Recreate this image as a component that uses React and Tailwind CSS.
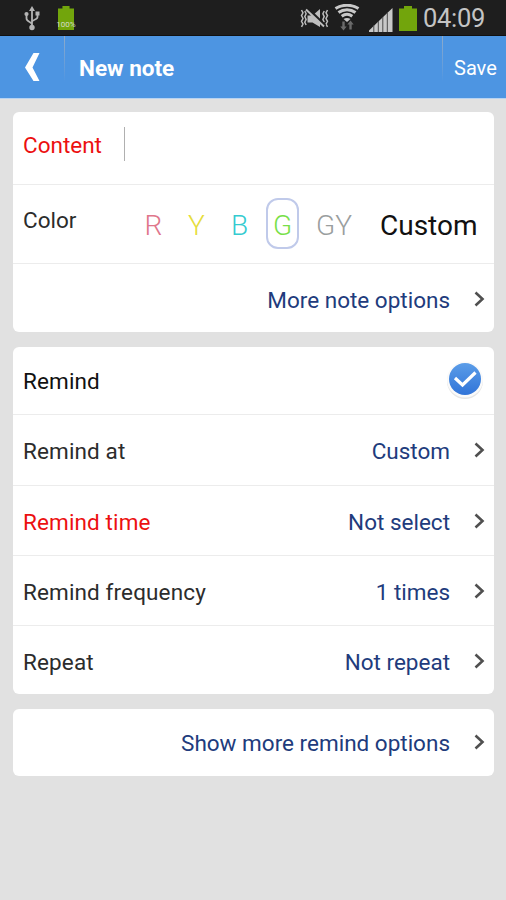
import { useState } from "react";

const COLORS = [
  { id: "R", className: "w-[33px] text-[#e0768b]" },
  { id: "Y", className: "w-[33px] text-[#e6dd3c]" },
  { id: "B", className: "w-[33px] text-[#35cbd0]" },
  { id: "G", className: "w-[33px] text-[#78e048]" },
  { id: "GY", className: "ml-[1px] w-12 text-[#9a9e9e]" },
];

function UsbIcon() {
  return (
    <svg width="16" height="25" viewBox="0 0 16 25" fill="none" stroke="#b4b4b4" strokeWidth="1.8">
      <path d="M8 4v17M8 18.500C8 16 2.500 16 2.500 12.500V8M8 16c0-2.500 5.500-2 5.500-5V7.500" />
      <path d="M8 0l3 5H5z" fill="#b4b4b4" stroke="none" />
      <circle cx="2.500" cy="8" r="2.100" fill="#b4b4b4" stroke="none" />
      <path d="M11.500 5.500h4v4h-4z" fill="#b4b4b4" stroke="none" />
      <circle cx="8" cy="21.500" r="2.700" fill="#b4b4b4" stroke="none" />
    </svg>
  );
}

function BatteryIcon({ className }) {
  return (
    <svg className={className} viewBox="0 0 18 25" preserveAspectRatio="none" fill="#72a50c">
      <path d="M5 0h8v2.500h5V25H0V2.500h5z" />
    </svg>
  );
}

function MuteIcon() {
  return (
    <svg width="29" height="21" viewBox="0 0 29 21" fill="none" stroke="#bdbdbd" strokeWidth="1.500">
      <path d="M1.500 2l1.500 2.800-1.500 2.800 1.500 2.900-1.500 2.800 1.500 2.800-1.500 2.800M4.800 3l1.300 2.800-1.300 2.800 1.300 2.800-1.300 2.800 1.300 2.800" />
      <path d="M27.500 2L26 4.800l1.500 2.800-1.500 2.900 1.500 2.800-1.500 2.800 1.500 2.800M24.200 3l-1.300 2.800 1.300 2.800-1.300 2.800 1.300 2.800" />
      <path d="M7.500 7.500h5L20 1v18l-7.500-4.500h-5z" fill="#bdbdbd" stroke="none" />
      <path d="M8 1L25 17.500" stroke="#1e1e1e" strokeWidth="3" />
      <path d="M6 1.500L24 18.500" strokeWidth="2" />
    </svg>
  );
}

function WifiIcon() {
  return (
    <svg width="26" height="27" viewBox="0 0 26 27" fill="none" stroke="#c9c9c9" strokeWidth="3">
      <path d="M1.500 4.500C8 .2 18 .2 24.500 4.500M4.500 8.500c5-3.800 12-3.800 17 0M7.700 12.300c3.200-2.400 7.400-2.400 10.600 0" />
      <path d="M9.500 15c2-1.500 5-1.500 7 0L13 18z" fill="#c9c9c9" stroke="none" />
      <path d="M8.300 17.500h2.400v5h2l-3.200 4-3.200-4h2zM15.300 25.500h2.400v-5h2l-3.200-4-3.200 4h2z" fill="#6a6a6a" stroke="none" />
    </svg>
  );
}

function SignalIcon() {
  return (
    <svg width="24" height="24" viewBox="0 0 24 24" fill="#c9c9c9">
      <path d="M0 24v-1.500L23.500 0v24z" />
      <path d="M4.800 17v7M9.300 13v11M13.800 9v15M18.300 5v19" stroke="#4a4a4a" strokeWidth="1" />
    </svg>
  );
}

function StatusBar() {
  return (
    <div className="flex h-[36px] items-start bg-[#1e1e1e] border-b border-[#111]">
      <div className="ml-[24px] mt-[6px]">
        <UsbIcon />
      </div>
      <div className="relative ml-[16px] mt-[6px] w-[20px]">
        <BatteryIcon className="mx-auto h-[24px] w-[16px]" />
        <span className="absolute inset-x-0 bottom-[1px] text-center text-[8px] leading-[8px] text-[#d5dcc8]">
          100%
        </span>
      </div>
      <div className="ml-auto mt-[8px]">
        <MuteIcon />
      </div>
      <div className="ml-[5px] mt-[4px]">
        <WifiIcon />
      </div>
      <div className="ml-[9px] mt-[8px]">
        <SignalIcon />
      </div>
      <BatteryIcon className="ml-[6px] mt-[6px] h-[25px] w-[18px]" />
      <span className="ml-[6px] mt-[3px] w-[83px] text-[25.5px] leading-[30px] tracking-[-0.3px] text-[#c4c4c4]">
        04:09
      </span>
    </div>
  );
}

function Header() {
  return (
    <header className="flex h-[63px] bg-[#4d95e2] text-white border-b border-[#b7d3f2]">
      <button type="button" className="flex w-[64px] pl-[25px] pt-[17px]">
        <svg width="15" height="29" viewBox="0 0 15 29" fill="#fff">
          <path d="M8.500 0H14.500L7.500 14.500 14.500 28H8.500L0 14.500z" />
        </svg>
      </button>
      <div className="h-[46px] w-px bg-linear-to-b from-[#8fabc9] to-[#4d95e2]" />
      <h1 className="ml-[14px] mt-[17px] text-[22.500px] leading-[30px] font-bold">New note</h1>
      <div className="ml-auto h-[46px] w-px bg-linear-to-b from-[#8fabc9] to-[#4d95e2]" />
      <button type="button" className="mt-[17px] flex w-[63px] pl-[11px] text-[20px] leading-[30px]">
        Save
      </button>
    </header>
  );
}

function Chevron() {
  return (
    <svg className="ml-[24px] mr-[9px]" width="11" height="16" viewBox="0 0 11 16" fill="none" stroke="#505050" strokeWidth="2.600">
      <path d="M1.500 1.500L8.500 8l-7 6.500" />
    </svg>
  );
}

function Card({ className, children }) {
  return (
    <section className={`ml-[13px] mr-[12px] divide-y divide-[#ececec] overflow-hidden rounded-[6px] bg-white ${className}`}>
      {children}
    </section>
  );
}

function Row({ label, value, required, className }) {
  return (
    <div className={`flex items-center pl-[10px] ${className}`}>
      {label && (
        <span className={`pt-[2px] tracking-[0.13px] ${required ? "text-[#ec1010]" : "text-[#2c2c2c]"}`}>
          {label}
        </span>
      )}
      <span className="ml-auto pt-[2px] text-[#213b7c]">{value}</span>
      <Chevron />
    </div>
  );
}

function CheckIcon() {
  return (
    <svg width="38" height="38" viewBox="0 0 38 38" fill="none">
      <defs>
        <linearGradient id="check" x1="0" y1="0" x2="0" y2="1">
          <stop offset="0" stopColor="#5b9de8" />
          <stop offset="1" stopColor="#3174d8" />
        </linearGradient>
      </defs>
      <circle cx="19" cy="20" r="18" fill="#e6e6e6" />
      <circle cx="19" cy="18.500" r="18" fill="#fafafa" />
      <circle cx="19" cy="18" r="16" fill="url(#check)" />
      <path d="M9 17l7.500 7L29.500 11.500" stroke="#fff" strokeWidth="3.200" />
    </svg>
  );
}

export default function App() {
  const [color, setColor] = useState("G");
  const [remind, setRemind] = useState(true);

  return (
    <div className="h-[900px] w-[506px] overflow-hidden bg-[#e1e1e1] font-['Roboto',sans-serif] text-[22.500px] leading-[30px]">
      <StatusBar />
      <Header />

      <Card className="mt-[13px] h-[220px]">
        <div className="flex h-[73px] items-center pl-[10px]">
          <span className="mt-[-6px] text-[#ec1010]">Content</span>
          <span className="ml-auto mr-[369px] mt-[-9px] h-[34px] w-px bg-[#b0b0b0]" />
        </div>
        <div className="flex h-[79px] pl-[10px] pt-[13px]">
          <span className="mt-[7px] w-[113px] text-[#2c2c2c]">Color</span>
          <div className="ml-[1px] flex h-[51px] items-center gap-[10px] text-[28px]">
            {COLORS.map((c) => (
              <button
                key={c.id}
                type="button"
                onClick={() => setColor(c.id)}
                className={`h-[51px] border-2 rounded-[12px] pt-[4px] font-light ${c.className} ${
                  color === c.id ? "border-[#c0caea]" : "border-transparent"
                }`}
              >
                {c.id}
              </button>
            ))}
            <button type="button" className="ml-[12px] pt-[4px] text-[#111]">
              Custom
            </button>
          </div>
        </div>
        <Row value="More note options" className="h-[70px]" />
      </Card>

      <Card className="mt-[15px] h-[347px]">
        <div className="flex h-[68px] items-center pl-[10px]">
          <span className="tracking-[0.13px] text-[#111]">Remind</span>
          <button type="button" className="ml-auto mr-[10px] mt-[-2px]" onClick={() => setRemind(!remind)}>
            {remind && <CheckIcon />}
          </button>
        </div>
        <Row label="Remind at" value="Custom" className="h-[71px]" />
        <Row label="Remind time" value="Not select" required className="h-[70px]" />
        <Row label="Remind frequency" value="1 times" className="h-[70px]" />
        <Row label="Repeat" value="Not repeat" className="h-[70px]" />
      </Card>

      <Card className="mt-[15px] h-[67px]">
        <Row value="Show more remind options" className="h-[66px]" />
      </Card>
    </div>
  );
}
